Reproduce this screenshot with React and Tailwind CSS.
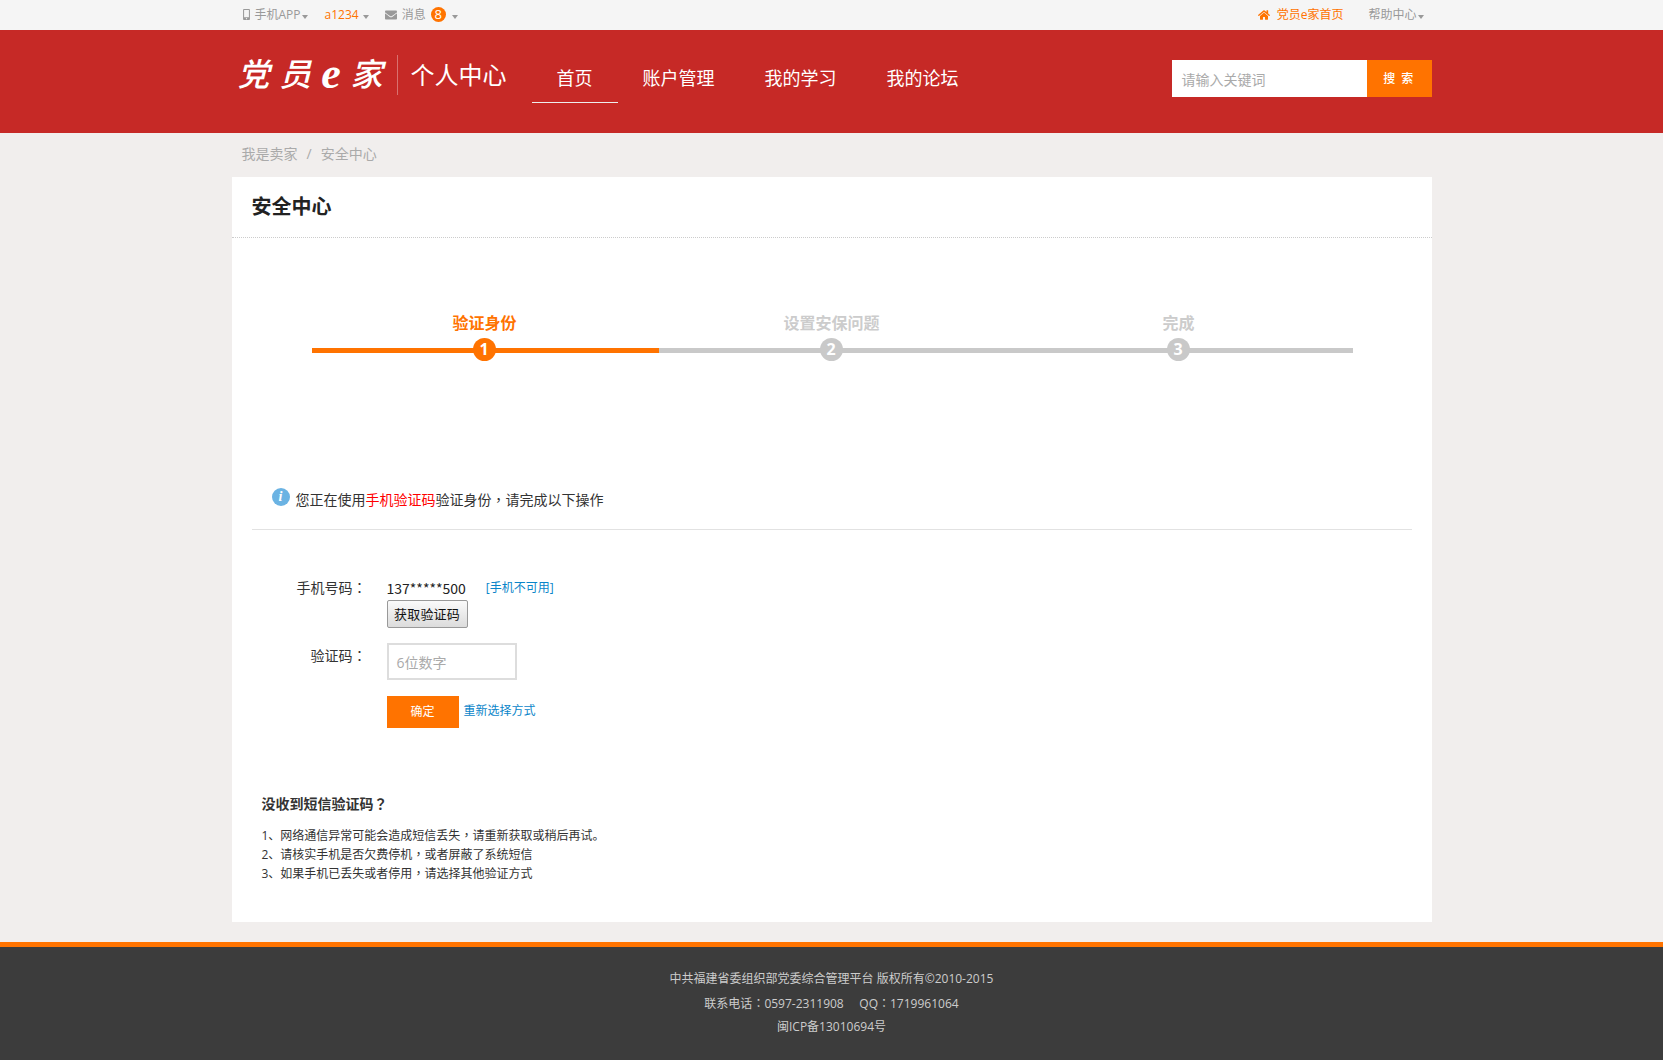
import React from 'react';
import { FaMobileAlt, FaEnvelope, FaHome } from 'react-icons/fa';

const FONT = "font-['Open_Sans','Noto_Sans_CJK_SC','Liberation_Sans',sans-serif]";

const Caret = () => (
    <span className="inline-block w-0 h-0 border-x-[3px] border-x-transparent border-t-[4px] border-t-[#999]" />
);

// full-width punctuation sits centred in the original, the TC font draws it that way
const Punct = ({ children }) => (
    <span className="font-['Noto_Sans_CJK_TC',sans-serif]">{children}</span>
);

const NAV = ['首页', '账户管理', '我的学习', '我的论坛'];

const STEPS = [
    { num: 1, label: '验证身份', active: true },
    { num: 2, label: '设置安保问题', active: false },
    { num: 3, label: '完成', active: false },
];

const TIPS = [
    ['1、网络通信异常可能会造成短信丢失', '请重新获取或稍后再试。'],
    ['2、请核实手机是否欠费停机', '或者屏蔽了系统短信'],
    ['3、如果手机已丢失或者停用', '请选择其他验证方式'],
];

const TopBar = () => (
    <div className="h-[30px] bg-[#f5f5f5] text-xs text-[#999]">
        <div className="w-[1200px] mx-auto h-full flex items-center justify-between pb-[1px]">
            <div className="flex items-center pl-[9px]">
                <FaMobileAlt className="text-[11px] mr-[3px]" />
                <span>手机APP</span>
                <span className="ml-[1px]"><Caret /></span>
                <span className="ml-[17px] text-[#ff7300]">a1234</span>
                <span className="ml-[4px]"><Caret /></span>
                <FaEnvelope className="ml-[16px] text-[12px] text-[#999]" />
                <span className="ml-[5px]">消息</span>
                <span className="ml-[5px] w-[15px] h-[15px] rounded-full bg-[#ff7300] text-white flex items-center justify-center text-[13px] leading-none">8</span>
                <span className="ml-[6px]"><Caret /></span>
            </div>
            <div className="flex items-center pr-[8px]">
                <FaHome className="text-[12px] text-[#ff7300] mr-[7px]" />
                <span className="text-[#ff7300]">党员e家首页</span>
                <span className="ml-[25px]">帮助中心</span>
                <span className="ml-[1px]"><Caret /></span>
            </div>
        </div>
    </div>
);

const Header = () => (
    <div className="h-[103px] bg-[#c62926] text-white">
        <div className="w-[1200px] mx-auto h-full flex items-start">
            <div className="w-[145px] ml-[6px] mr-[14px] mt-[20px] h-[48px] flex items-center justify-between text-[32px] leading-none italic font-medium">
                <span>党</span>
                <span>员</span>
                <span className="font-['Liberation_Serif',serif] font-bold text-[44px]">e</span>
                <span>家</span>
            </div>
            <div className="w-px h-[40px] bg-[#d9716f] mt-[25px]" />
            <div className="ml-[13px] mt-[29px] text-2xl leading-[32px]">个人中心</div>
            <nav className="flex ml-[25px] mt-[29px]">
                {NAV.map((item, i) => (
                    <a
                        key={item}
                        className={`h-[44px] px-[25px] text-lg leading-[38px] ${i === 0 ? 'border-b border-[#eee]' : ''}`}
                    >
                        {item}
                    </a>
                ))}
            </nav>
            <div className="ml-auto mt-[30px] flex h-[37px]">
                <div className="w-[195px] bg-white text-sm text-[#aaa] pl-[10px] leading-[39px]">请输入关键词</div>
                <div className="w-[65px] bg-[#ff7300] text-xs text-center leading-[37px] font-medium tracking-[1.5px]">搜 索</div>
            </div>
        </div>
    </div>
);

const Stepper = () => (
    <div className="flex ml-[80px] mt-[73px]">
        {STEPS.map(step => (
            <div key={step.num} className="w-[347px] flex flex-col items-center">
                <div className={`text-base leading-[24px] font-semibold pr-[1px] ${step.active ? 'text-[#ff7300]' : 'text-[#ccc]'}`}>
                    {step.label}
                </div>
                <div className={`relative w-full h-[5px] mt-[13px] ${step.active ? 'bg-[#ff7300]' : 'bg-[#c9c9c9]'}`}>
                    <span
                        className={`absolute left-[161px] top-[-10px] w-[23px] h-[23px] rounded-full text-white text-base font-bold leading-[23px] text-center ${step.active ? 'bg-[#ff7300]' : 'bg-[#c9c9c9]'}`}
                    >
                        {step.num}
                    </span>
                </div>
            </div>
        ))}
    </div>
);

const VerifyForm = () => (
    <div className="mt-[45px] text-sm text-[#333]">
        <div className="flex">
            <div className="w-[155px] pr-[20px] text-right leading-[24px]">手机号码<Punct>：</Punct></div>
            <div>
                <div className="flex items-center h-[25px]">
                    <span className="text-[#222] font-['Noto_Sans_CJK_SC',sans-serif]">137*****500</span>
                    <a className="ml-[20px] text-xs text-[#0a85c9]">[手机不可用]</a>
                </div>
                <button className="block w-[81px] h-[28px] border border-[#999] rounded-[2px] bg-gradient-to-b from-[#fafafa] to-[#dcdcdc] text-[13px] tracking-[0.2px] text-[#111]">
                    获取验证码
                </button>
            </div>
        </div>
        <div className="flex mt-[15px]">
            <div className="w-[155px] pr-[20px] text-right leading-[24px]">验证码<Punct>：</Punct></div>
            <div className="w-[130px] h-[37px] border-2 border-[#ddd] text-sm text-[#aaa] pl-[8px] leading-[35px]">6位数字</div>
        </div>
        <div className="flex items-start mt-[16px] pl-[155px]">
            <button className="w-[72px] h-[32px] bg-[#ff7300] text-white text-xs">确定</button>
            <a className="ml-[5px] mt-[7px] text-xs leading-[16px] text-[#0a85c9]">重新选择方式</a>
        </div>
    </div>
);

export default function App() {
    return (
        <div className={`${FONT} min-h-[1060px] bg-[#f1eeed] flex flex-col`}>
            <TopBar />
            <Header />

            <div className="w-[1200px] mx-auto h-[44px] flex items-center pl-[10px] pb-[3px] text-sm text-[#aaa]">
                <span>我是卖家</span>
                <span className="mx-[9px]">/</span>
                <span>安全中心</span>
            </div>

            <div className="w-[1200px] mx-auto bg-white h-[745px]">
                <div className="h-[61px] pl-[20px] border-b border-dotted border-[#ccc] text-xl font-bold leading-[60px] text-[#222]">
                    安全中心
                </div>

                <Stepper />

                <div className="flex items-center mt-[134px] pl-[40px] text-sm text-[#333]">
                    <span className="w-[18px] h-[18px] mb-[5px] rounded-full bg-[#6bb3e3] text-white text-sm font-bold italic text-center leading-[18px] font-['Liberation_Serif',serif]">i</span>
                    <span className="ml-[6px] leading-[24px]">
                        您正在使用<span className="text-[#f00]">手机验证码</span>验证身份<Punct>，</Punct>请完成以下操作
                    </span>
                </div>
                <div className="mx-[20px] mt-[17px] border-t border-[#e2e2e2]" />

                <VerifyForm />

                <div className="mt-[65px] pl-[30px] text-[#333]">
                    <div className="text-sm font-bold leading-[20px]">没收到短信验证码<Punct>？</Punct></div>
                    <ul className="mt-[11px] text-xs">
                        {TIPS.map(([a, b]) => <li key={a} className="h-[19px] leading-[19px]">{a}<Punct>，</Punct>{b}</li>)}
                    </ul>
                </div>
            </div>

            <div className="mt-[20px] flex-1 border-t-[5px] border-[#ff7300] bg-[#3c3c3c] pt-[20px] text-center text-xs text-[#ccc]">
                <p className="h-[24px] leading-[24px]">中共福建省委组织部党委综合管理平台 版权所有©2010-2015</p>
                <p className="h-[24px] leading-[24px]">联系电话<Punct>：</Punct>0597-2311908 &nbsp;&nbsp;&nbsp; QQ<Punct>：</Punct>1719961064</p>
                <p className="h-[24px] leading-[24px]">闽ICP备13010694号</p>
            </div>
        </div>
    );
}
